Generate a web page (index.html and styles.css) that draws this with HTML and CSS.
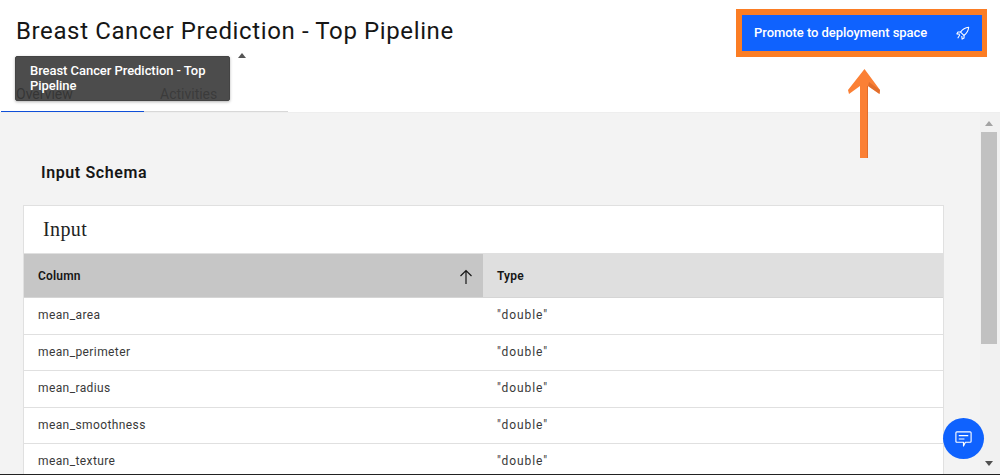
FILE: index.html
```html
<!DOCTYPE html>
<html lang="en">
<head>
  <meta charset="UTF-8">
  <title>Breast Cancer Prediction - Top Pipeline</title>
  <link rel="stylesheet" href="styles.css">
</head>
<body>
  <header class="page-header">
    <div class="header-top">
      <h1 class="page-title">Breast Cancer Prediction - Top Pipeline</h1>
      <div class="promote-outline">
        <button class="promote-btn">
          <span class="promote-label">Promote to deployment space</span>
          <svg class="rocket" viewBox="0 0 16 16" width="14" height="14" fill="none" stroke="#fff" stroke-width="1.2" stroke-linejoin="round">
            <path d="M14.5 1.5 C10.5 2 7.5 3.8 5.2 7 L9 10.8 C12.2 8.5 14 5.5 14.5 1.5 Z"/>
            <path d="M5.4 6.8 L2.2 6.8 L1 9 L4.6 9.4"/>
            <path d="M9.2 10.6 L9.2 13.8 L7 15 L6.6 11.4"/>
            <path d="M4.4 10 L2 14"/>
          </svg>
        </button>
      </div>
    </div>
    <nav class="tabs">
      <a class="tab tab-active">Overview</a>
      <a class="tab">Activities</a>
    </nav>
    <div class="tooltip">Breast Cancer Prediction - Top Pipeline</div>
    <div class="tooltip-caret"></div>
  </header>

  <div class="body-area">
    <main class="content">
      <h2 class="section-title">Input Schema</h2>
      <section class="card">
        <h3 class="card-title">Input</h3>
        <div class="table-head">
          <div class="th th-sorted">
            <span>Column</span>
            <svg class="sort-icon" viewBox="0 0 14 16" width="14" height="16" fill="none" stroke="#161616" stroke-width="1.2">
              <path d="M7 15 V1.5 M1.5 7 L7 1.5 L12.5 7"/>
            </svg>
          </div>
          <div class="th">Type</div>
        </div>
        <div class="row"><div class="cell">mean_area</div><div class="cell cell-type">"double"</div></div>
        <div class="row"><div class="cell">mean_perimeter</div><div class="cell cell-type">"double"</div></div>
        <div class="row"><div class="cell">mean_radius</div><div class="cell cell-type">"double"</div></div>
        <div class="row"><div class="cell">mean_smoothness</div><div class="cell cell-type">"double"</div></div>
        <div class="row"><div class="cell">mean_texture</div><div class="cell cell-type">"double"</div></div>
      </section>
    </main>
    <div class="scrollbar">
      <div class="scroll-up"></div>
      <div class="scroll-thumb"></div>
      <div class="scroll-down"></div>
    </div>
  </div>

  <!-- annotation arrow -->
  <svg class="arrow" viewBox="0 0 36 92" width="36" height="92">
    <path d="M18.5 1 L34 22 L33.5 26 L22 18 L22 90 L14 90 L14 18 L3 26 L2 22 Z" fill="#fb8035"/>
    <path d="M22 18 L33.5 26 L34 22 L23 14 Z M21 18 H22 V90 H21 Z" fill="#d9682a" opacity="0.75"/>
  </svg>

  <button class="chat-btn">
    <svg viewBox="0 0 20 20" width="19" height="19" fill="none" stroke="#fff" stroke-width="1.2">
      <path d="M3 3 H17 Q18 3 18 4 V13 Q18 14 17 14 H12 L10 18 V14 H3 Q2 14 2 13 V4 Q2 3 3 3 Z" stroke-linejoin="round"/>
      <path d="M5 7 H15 M5 10.5 H11"/>
    </svg>
  </button>
  <div class="window-edge"></div>
</body>
</html>
```

FILE: styles.css
```css
html, body {
  height: 100%;
}
body {
  margin: 0;
  height: 475px;
  overflow: hidden;
  position: relative;
  display: flex;
  flex-direction: column;
  font-family: 'Roboto', 'Liberation Sans', sans-serif;
  color: #161616;
  background: #fff;
}
.page-header {
  height: 113px;
  flex: none;
  position: relative;
  background: #fff;
  border-bottom: 1px solid #eeeeee;
  box-sizing: border-box;
}
.header-top {
  display: flex;
  justify-content: space-between;
  align-items: flex-start;
  padding: 9px 0 0 16px;
}
.page-title {
  margin: 0;
  padding-top: 6px;
  font-size: 24px;
  font-weight: 400;
  line-height: 32px;
  letter-spacing: 0.62px;
}
.promote-outline {
  margin-right: 13px;
  border: solid #fb7d24;
  border-width: 6px 5px 6px 6px;
}
.promote-btn {
  width: 240px;
  height: 36px;
  border: none;
  background: #0f62fe;
  color: #fff;
  font-family: inherit;
  font-size: 13px;
  font-weight: 500;
  letter-spacing: -0.05px;
  padding: 0 12px;
  display: flex;
  align-items: center;
  justify-content: space-between;
}
.promote-label {
  margin-bottom: 2px;
}
.tabs {
  position: absolute;
  left: 1px;
  bottom: 0;
  display: flex;
}
.tab {
  width: 143px;
  height: 28px;
  box-sizing: border-box;
  padding: 2px 0 0 15px;
  font-size: 14px;
  color: #525252;
  border-bottom: 1px solid #d8d8d8;
}
.tab + .tab {
  width: 144px;
  padding-left: 16px;
}
.tab-active {
  color: #161616;
  border-bottom-color: #0f4fd8;
}
.tooltip {
  position: absolute;
  left: 15px;
  top: 56px;
  width: 215px;
  height: 45px;
  box-sizing: border-box;
  padding: 6px 14px;
  background: rgba(57, 57, 57, 0.9);
  border: 1px solid #444;
  border-radius: 2px;
  box-shadow: 0 1px 3px rgba(0, 0, 0, 0.3);
  color: #fff;
  font-size: 13px;
  font-weight: 500;
  letter-spacing: -0.05px;
  line-height: 15px;
}
.tooltip-caret {
  position: absolute;
  left: 238px;
  top: 53px;
  width: 0;
  height: 0;
  border-left: 4px solid transparent;
  border-right: 4px solid transparent;
  border-bottom: 5px solid #555;
}
.body-area {
  flex: 1;
  display: flex;
  min-height: 0;
  background: #f3f3f3;
}
.content {
  flex: 1;
  min-width: 0;
  padding: 0 36px 0 23px;
  overflow: hidden;
}
.section-title {
  margin: 50px 0 23px 18px;
  font-size: 16px;
  font-weight: 600;
  line-height: 19px;
  letter-spacing: 0.6px;
}
.card {
  background: #fff;
  border: 1px solid #e0e0e0;
  border-bottom: none;
}
.card-title {
  margin: 0;
  height: 48px;
  box-sizing: border-box;
  padding: 11px 0 0 19px;
  font-family: 'Liberation Serif', serif;
  font-size: 20px;
  font-weight: 400;
  line-height: 24px;
  letter-spacing: 0.4px;
  color: #222;
  border-bottom: 1px solid #e0e0e0;
}
.table-head {
  display: grid;
  grid-template-columns: 459px 1fr;
  height: 44px;
  background: #dfdfdf;
  border-bottom: 1px solid #d5d5d5;
  box-sizing: border-box;
}
.th {
  display: flex;
  align-items: center;
  justify-content: space-between;
  padding: 0 10px 0 14px;
  font-size: 12px;
  font-weight: 600;
  letter-spacing: 0.2px;
}
.th-sorted {
  background: #c6c6c6;
}
.sort-icon {
  margin-top: 3px;
}
.row {
  display: grid;
  grid-template-columns: 459px 1fr;
  height: 36.5px;
  box-sizing: border-box;
  border-bottom: 1px solid #e0e0e0;
}
.cell {
  padding: 9px 14px 0;
  font-size: 12px;
  line-height: 16px;
  letter-spacing: 0.4px;
  color: #393939;
}
.cell-type {
  letter-spacing: 0.95px;
}
.scrollbar {
  width: 20px;
  box-sizing: border-box;
  flex: none;
  display: flex;
  flex-direction: column;
  align-items: center;
  background: #f1f1f1;
  padding-right: 2px;
}
.scroll-up {
  width: 0;
  height: 0;
  margin: 8px 0 6px;
  border-left: 4px solid transparent;
  border-right: 4px solid transparent;
  border-bottom: 5px solid #a3a3a3;
}
.scroll-thumb {
  width: 16px;
  height: 212px;
  background: #c1c1c1;
}
.scroll-down {
  width: 0;
  height: 0;
  margin-top: auto;
  margin-bottom: 9px;
  border-left: 4px solid transparent;
  border-right: 4px solid transparent;
  border-top: 5px solid #505050;
}
.arrow {
  position: absolute;
  left: 846px;
  top: 68px;
}
.chat-btn {
  position: absolute;
  left: 943px;
  top: 418px;
  width: 41px;
  height: 41px;
  border: none;
  border-radius: 50%;
  padding: 0;
  background: #0f62fe;
  display: flex;
  align-items: center;
  justify-content: center;
}
.window-edge {
  position: absolute;
  left: 0;
  right: 0;
  bottom: 0;
  height: 1px;
  background: #222;
}
```
